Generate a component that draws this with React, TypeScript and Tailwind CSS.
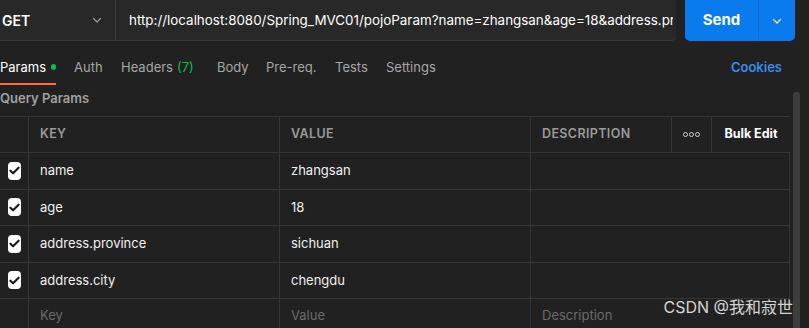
import React from 'react'

const rows = [
  { key: 'name', value: 'zhangsan' },
  { key: 'age', value: '18' },
  { key: 'address.province', value: 'sichuan' },
  { key: 'address.city', value: 'chengdu' },
]

const Chevron = ({ className }: { className?: string }) => (
  <svg className={className} width="12" height="12" viewBox="0 0 12 12" fill="none">
    <path d="M2.5 4.5L6 8l3.5-3.5" stroke="currentColor" strokeWidth="1.2" strokeLinecap="round" strokeLinejoin="round" />
  </svg>
)

const CheckBox = () => (
  <div className="w-[18px] h-[18px] rounded-[4px] bg-white flex items-center justify-center">
    <svg width="13" height="13" viewBox="0 0 12 12" fill="none">
      <path d="M2.2 6.2l2.5 2.4L9.8 3.4" stroke="#1a1a1a" strokeWidth="2" strokeLinecap="round" strokeLinejoin="round" />
    </svg>
  </div>
)

const App = () => {
  const cols = 'grid grid-cols-[29px_251px_251px_141px_40px_78px]'
  const cell = 'border-r border-[#353535] flex items-center px-[11px]'
  const tab = 'flex items-end h-[44px] pb-[10px] leading-[16px]'

  return (
    <div
      className="relative w-[809px] h-[328px] overflow-hidden bg-[#212121] text-[13px] text-[#f0f0f0]"
      style={{ fontFamily: 'Inter, "Noto Sans CJK SC", sans-serif' }}
    >
      {/* Request bar */}
      <div className="flex items-start h-[41px]">
        <div className="flex h-[41px] w-[676px] bg-[#282828] border-b border-[#3a3a3a] rounded-br-[5px]">
          <div className="w-[116px] flex items-center justify-between pl-[2px] pr-[12px] border-r border-[#3a3a3a] font-semibold text-[14px] text-white">
            <span>GET</span>
            <Chevron className="text-[#9a9a9a]" />
          </div>
          <div className="flex-1 min-w-0 flex items-center pl-[13px] pr-[3px] overflow-hidden whitespace-nowrap text-[13.4px] text-white">
            <span className="block overflow-hidden">http://localhost:8080/Spring_MVC01/pojoParam?name=zhangsan&amp;age=18&amp;address.pr</span>
          </div>
        </div>
        <div className="ml-[9px] flex h-[41px] w-[110px] bg-[#097bed] rounded-b-[5px] text-white">
          <div className="w-[74px] flex items-center justify-center font-bold text-[15px] border-r border-[#0a6ccf]">Send</div>
          <div className="flex-1 flex items-center justify-center">
            <Chevron />
          </div>
        </div>
      </div>

      {/* Tabs */}
      <div className="flex items-end h-[44px] text-[13px] text-[#a6a6a6]">
        <div className="w-[74px] h-[44px]">
          <div className={`relative ${tab} w-[56px] text-white`}>
            <span>Params</span>
            <span className="ml-[5px] mb-[5px] w-[6px] h-[6px] rounded-full bg-[#0cbb52]" />
            <div className="absolute left-0 right-0 bottom-0 h-[2px] bg-[#ff6c37]" />
          </div>
        </div>
        <div className={`${tab} w-[47px]`}>Auth</div>
        <div className={`${tab} w-[96px]`}>
          Headers <span className="ml-[4px] text-[#0cbb52]">(7)</span>
        </div>
        <div className={`${tab} w-[49px]`}>Body</div>
        <div className={`${tab} w-[69px]`}>Pre-req.</div>
        <div className={`${tab} w-[51px]`}>Tests</div>
        <div className={tab}>Settings</div>
        <div className={`${tab} ml-auto mr-[27px] font-semibold text-[#3b8ced]`}>Cookies</div>
      </div>

      <div className="h-[31px] flex items-start pt-[5px] leading-[16px] font-semibold text-[13px] text-[#a0a0a0]">Query Params</div>

      {/* Table */}
      <div className="w-[790px] border-t border-[#353535]">
        <div className={`${cols} h-[36px] border-b border-[#353535] text-[12.5px] tracking-[0.03em] font-semibold text-[#9a9a9a]`}>
          <div className={cell} />
          <div className={cell}>KEY</div>
          <div className={cell}>VALUE</div>
          <div className={cell}>DESCRIPTION</div>
          <div className={`${cell} justify-center px-0`}>
            <div className="flex gap-[1px]">
              {[0, 1, 2].map(i => (
                <span key={i} className="w-[5px] h-[5px] rounded-full border border-[#d0d0d0]" />
              ))}
            </div>
          </div>
          <div className="flex items-center justify-center font-bold text-[12.5px] tracking-normal text-white">Bulk Edit</div>
        </div>
        {rows.map(r => (
          <div key={r.key} className="grid grid-cols-[29px_251px_251px_259px] h-[36.5px] border-b border-[#353535]">
            <div className={`${cell} justify-center px-0`}>
              <CheckBox />
            </div>
            <div className={cell}>{r.key}</div>
            <div className={cell}>{r.value}</div>
            <div className={cell} />
          </div>
        ))}
        <div className="grid grid-cols-[29px_251px_251px_259px] h-[34px] text-[#6b6b6b]">
          <div className={cell} />
          <div className={cell}>Key</div>
          <div className={cell}>Value</div>
          <div className="flex items-center px-[11px]">Description</div>
        </div>
      </div>

      {/* Scrollbar */}
      <div className="absolute right-[9px] top-[92px] bottom-0 w-[7px] rounded-t-[3px] bg-[#3d3d3d]" />

      {/* Watermark */}
      <div className="absolute right-[16px] bottom-[9px] text-[16px] text-[#d4d4d4]">CSDN @我和寂世</div>
    </div>
  )
}

export default App
